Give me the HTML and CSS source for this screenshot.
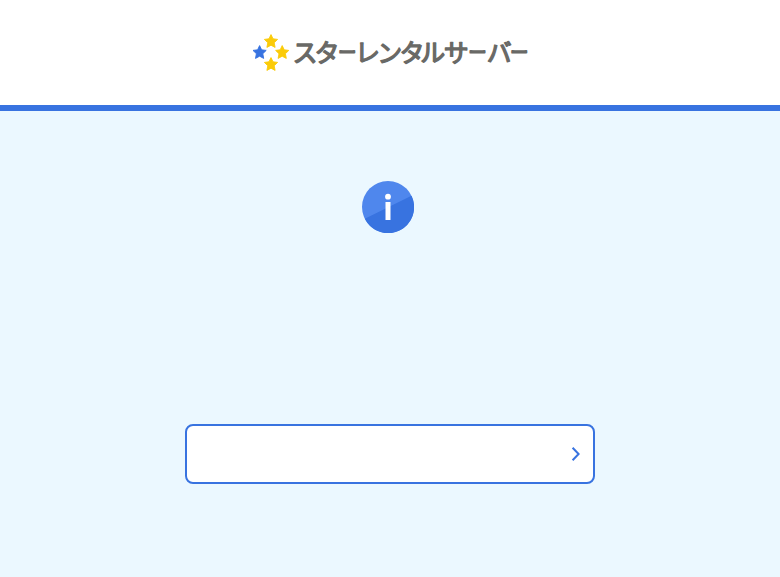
FILE: index.html
```html
<!DOCTYPE html>
<html lang="ja">
<head>
<meta charset="utf-8">
<title>スターレンタルサーバー</title>
<link rel="stylesheet" href="styles.css">
</head>
<body>
<header class="header">
  <svg class="logo" width="276" height="40" viewBox="252 33 276 40" role="img" aria-label="スターレンタルサーバー">
    <defs>
      <path id="star" d="M0-6.6 2-2.4 6.6-1.8 3.2 1.5 4.1 6.2 0 4-4.1 6.2-3.2 1.5-6.6-1.8-2-2.4Z" stroke-linejoin="round"/>
    </defs>
    <use href="#star" class="star" x="271" y="41.2"/>
    <use href="#star" class="star star-blue" x="259.6" y="52.2"/>
    <use href="#star" class="star" x="282.2" y="52.2"/>
    <use href="#star" class="star" x="271" y="64.2"/>
    <text class="logo-text" y="61.6" x="292.6 314.5 338.2 355 377.2 399.5 420.3 443.7 468.5 486.7 510.2">スタ<tspan class="bar" dy="-2.6">ー</tspan><tspan dy="2.6">レンタルサ</tspan><tspan class="bar" dy="-2.6">ー</tspan><tspan dy="2.6">バ</tspan><tspan class="bar" dy="-2.6">ー</tspan></text>
  </svg>
</header>
<main class="main">
  <svg class="info" width="52" height="52" viewBox="0 0 52 52" aria-hidden="true">
    <circle class="info-light" cx="26" cy="26" r="26"/>
    <path class="info-dark" d="M2.8 37.7 49.5 14.8A26 26 0 0 1 2.8 37.7Z"/>
    <circle class="info-mark" cx="26" cy="15.7" r="2.9"/>
    <path class="info-mark" d="M23.5 21h5v18h-5z"/>
  </svg>
  <a class="button" href="#">
    <svg width="10" height="16" viewBox="0 0 10 16" aria-hidden="true"><path class="chevron" d="M1.6 1.7 7.6 8 1.6 14.3"/></svg>
  </a>
</main>
</body>
</html>
```
FILE: styles.css
```css
* { box-sizing: border-box; }
body {
  margin: 0;
  min-height: 577px;
  display: flex;
  flex-direction: column;
  background: #ebf8ff;
  font-family: "Noto Sans CJK JP", sans-serif;
}
.header {
  height: 111px;
  padding-top: 33px;
  display: flex;
  justify-content: center;
  align-items: flex-start;
  background: #fff;
  border-bottom: 6px solid #3873e0;
}
.logo { display: block; }
.star { fill: #fbcb08; stroke: #fbcb08; stroke-width: .9px; }
.star-blue { fill: #3873e0; stroke: #3873e0; }
.logo-text {
  font-size: 25px;
  font-weight: 400;
  fill: #696966;
  stroke: #696966;
  stroke-width: 1.3px;
  stroke-linejoin: round;
}
.bar { font-size: 18px; stroke-width: 1.7px; }
.main {
  flex: 1;
  padding-top: 70px;
  display: flex;
  flex-direction: column;
  align-items: center;
}
.info { display: block; margin-right: 4px; }
.info-light { fill: #4f87ed; }
.info-dark { fill: #3873e0; }
.info-mark { fill: #fff; }
.button {
  width: 410px;
  height: 60px;
  margin-top: 191px;
  padding-right: 12px;
  display: flex;
  justify-content: flex-end;
  align-items: center;
  background: #fff;
  border: 2px solid #3873e0;
  border-radius: 8px;
}
.chevron { fill: none; stroke: #3873e0; stroke-width: 2; }
```
